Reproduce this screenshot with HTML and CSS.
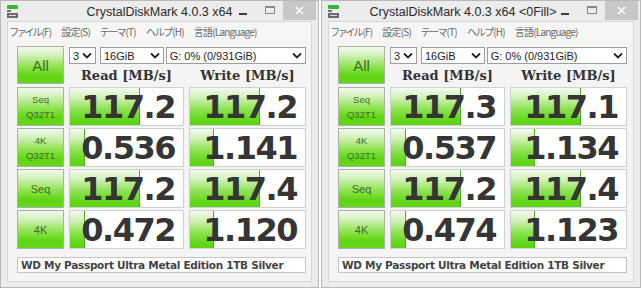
FILE: index.html
```html
<!DOCTYPE html>
<html lang="ja">
<head>
<meta charset="utf-8">
<title>CrystalDiskMark</title>
<link rel="stylesheet" href="styles.css">
</head>
<body>
<div class="desktop">
  <div class="window w1">
    <div class="titlebar">
      <svg class="app-icon" width="12" height="13" viewBox="0 0 12 13"><rect x="0" y="0" width="11" height="4" rx="1" fill="#34b834"/><rect x="0" y="5" width="4" height="2" fill="#707070"/><rect x="0" y="8" width="11" height="5" fill="#6a6a6a"/><rect x="2" y="10" width="7" height="1" fill="#dcdcdc"/></svg>
      <div class="title">CrystalDiskMark 4.0.3 x64</div>
      <div class="caption">
        <div class="cap-btn"><span class="min-glyph"></span></div>
        <div class="cap-btn"><span class="max-glyph"></span></div>
        <div class="cap-btn close"><svg width="9" height="9" viewBox="0 0 9 9"><path d="M1 1L8 8M8 1L1 8" stroke="#fff" stroke-width="1.6"/></svg></div>
      </div>
    </div>
    <div class="client">
      <div class="menubar"><span>ファイル(F)</span><span>設定(S)</span><span>テーマ(T)</span><span>ヘルプ(H)</span><span>言語(Language)</span></div>
      <div class="panel">
        <div class="btn all">All</div>
        <div class="controls">
          <div class="selects">
            <div class="select s-count"><span>3</span><svg class="chev" width="10" height="7" viewBox="0 0 10 7"><path d="M1 1.5L5 5.5L9 1.5" fill="none" stroke="#222" stroke-width="1.8"/></svg></div>
            <div class="select s-size"><span>16GiB</span><svg class="chev" width="10" height="7" viewBox="0 0 10 7"><path d="M1 1.5L5 5.5L9 1.5" fill="none" stroke="#222" stroke-width="1.8"/></svg></div>
            <div class="select s-drive"><span>G: 0% (0/931GiB)</span><svg class="chev" width="10" height="7" viewBox="0 0 10 7"><path d="M1 1.5L5 5.5L9 1.5" fill="none" stroke="#222" stroke-width="1.8"/></svg></div>
          </div>
          <div class="heads"><div>Read [MB/s]</div><div>Write [MB/s]</div></div>
        </div>

        <div class="btn label two"><span>Seq</span><span>Q32T1</span></div>
        <div class="cell"><div class="bar" style="width:70px"></div><span class="val">117.2</span></div>
        <div class="cell"><div class="bar" style="width:70px"></div><span class="val">117.2</span></div>

        <div class="btn label two"><span>4K</span><span>Q32T1</span></div>
        <div class="cell"><div class="bar" style="width:15px"></div><span class="val">0.536</span></div>
        <div class="cell"><div class="bar" style="width:24px"></div><span class="val">1.141</span></div>

        <div class="btn label one">Seq</div>
        <div class="cell"><div class="bar" style="width:70px"></div><span class="val">117.2</span></div>
        <div class="cell"><div class="bar" style="width:70px"></div><span class="val">117.4</span></div>

        <div class="btn label one">4K</div>
        <div class="cell"><div class="bar" style="width:15px"></div><span class="val">0.472</span></div>
        <div class="cell"><div class="bar" style="width:24px"></div><span class="val">1.120</span></div>

        <div class="comment">WD My Passport Ultra Metal Edition 1TB Silver</div>
      </div>
    </div>
  </div>

  <div class="window w2">
    <div class="titlebar">
      <svg class="app-icon" width="12" height="13" viewBox="0 0 12 13"><rect x="0" y="0" width="11" height="4" rx="1" fill="#34b834"/><rect x="0" y="5" width="4" height="2" fill="#707070"/><rect x="0" y="8" width="11" height="5" fill="#6a6a6a"/><rect x="2" y="10" width="7" height="1" fill="#dcdcdc"/></svg>
      <div class="title">CrystalDiskMark 4.0.3 x64 &lt;0Fill&gt;</div>
      <div class="caption">
        <div class="cap-btn"><span class="min-glyph"></span></div>
        <div class="cap-btn"><span class="max-glyph"></span></div>
        <div class="cap-btn close"><svg width="9" height="9" viewBox="0 0 9 9"><path d="M1 1L8 8M8 1L1 8" stroke="#fff" stroke-width="1.6"/></svg></div>
      </div>
    </div>
    <div class="client">
      <div class="menubar"><span>ファイル(F)</span><span>設定(S)</span><span>テーマ(T)</span><span>ヘルプ(H)</span><span>言語(Language)</span></div>
      <div class="panel">
        <div class="btn all">All</div>
        <div class="controls">
          <div class="selects">
            <div class="select s-count"><span>3</span><svg class="chev" width="10" height="7" viewBox="0 0 10 7"><path d="M1 1.5L5 5.5L9 1.5" fill="none" stroke="#222" stroke-width="1.8"/></svg></div>
            <div class="select s-size"><span>16GiB</span><svg class="chev" width="10" height="7" viewBox="0 0 10 7"><path d="M1 1.5L5 5.5L9 1.5" fill="none" stroke="#222" stroke-width="1.8"/></svg></div>
            <div class="select s-drive"><span>G: 0% (0/931GiB)</span><svg class="chev" width="10" height="7" viewBox="0 0 10 7"><path d="M1 1.5L5 5.5L9 1.5" fill="none" stroke="#222" stroke-width="1.8"/></svg></div>
          </div>
          <div class="heads"><div>Read [MB/s]</div><div>Write [MB/s]</div></div>
        </div>

        <div class="btn label two"><span>Seq</span><span>Q32T1</span></div>
        <div class="cell"><div class="bar" style="width:70px"></div><span class="val">117.3</span></div>
        <div class="cell"><div class="bar" style="width:70px"></div><span class="val">117.1</span></div>

        <div class="btn label two"><span>4K</span><span>Q32T1</span></div>
        <div class="cell"><div class="bar" style="width:15px"></div><span class="val">0.537</span></div>
        <div class="cell"><div class="bar" style="width:24px"></div><span class="val">1.134</span></div>

        <div class="btn label one">Seq</div>
        <div class="cell"><div class="bar" style="width:70px"></div><span class="val">117.2</span></div>
        <div class="cell"><div class="bar" style="width:70px"></div><span class="val">117.4</span></div>

        <div class="btn label one">4K</div>
        <div class="cell"><div class="bar" style="width:15px"></div><span class="val">0.474</span></div>
        <div class="cell"><div class="bar" style="width:24px"></div><span class="val">1.123</span></div>

        <div class="comment">WD My Passport Ultra Metal Edition 1TB Silver</div>
      </div>
    </div>
  </div>
</div>
</body>
</html>
```

FILE: styles.css
```css
* { box-sizing: border-box; }

html, body {
  margin: 0;
  padding: 0;
  background: #ffffff;
}

body {
  font-family: "Liberation Sans", "Noto Sans CJK JP", sans-serif;
  width: 642px;
  height: 292px;
  overflow: hidden;
}

.desktop {
  display: flex;
  gap: 2px;
  align-items: flex-start;
}

.window {
  width: 319px;
  height: 288px;
  background: #ececec;
  border: 1px solid #b9b9b9;
  display: flex;
  flex-direction: column;
}

.w2 { width: 320px; }

.titlebar {
  height: 20px;
  display: grid;
  grid-template-columns: minmax(0, 1fr) auto minmax(0, 1fr);
  align-items: start;
}

.app-icon {
  margin: 4px 0 0 6px;
  justify-self: start;
}

.title {
  font-family: "Liberation Sans", sans-serif;
  font-size: 12.5px;
  color: #2b2b2b;
  line-height: 20px;
  padding-top: 1px;
  white-space: nowrap;
}

.w2 .title {
  padding-right: 36px;
}

.caption {
  justify-self: end;
  display: flex;
  margin-right: 2px;
}

.cap-btn {
  width: 27px;
  height: 19px;
  display: flex;
  align-items: center;
  justify-content: center;
  flex: none;
}

.cap-btn.close {
  width: 33px;
  background: #c7c7c7;
}

.min-glyph {
  width: 8px;
  height: 2px;
  background: #3a3a3a;
  margin-top: 6px;
}

.max-glyph {
  width: 10px;
  height: 8px;
  border: 1px solid #8a8a8a;
  border-top-width: 2px;
  margin-top: -2px;
}

.client {
  margin: 0 6px 5px 6px;
  border: 1px solid #d6d6d6;
  background: #f4f4f4;
  flex: 1;
}

.menubar {
  height: 19px;
  background: #f6f6f6;
  display: flex;
  align-items: center;
  gap: 10px;
  padding-left: 2px;
  font-family: "Noto Sans CJK JP", sans-serif;
  font-feature-settings: "palt";
  font-size: 10px;
  letter-spacing: -0.8px;
  color: #6a6a6a;
  white-space: nowrap;
}

.panel {
  padding: 5px 0 2px 9px;
  display: grid;
  grid-template-columns: 47px 115px 117px;
  grid-template-rows: 39px repeat(4, 39px) 22px;
  column-gap: 5px;
  row-gap: 2px;
}

.btn {
  border: 1px solid #a9b3a3;
  background: linear-gradient(to bottom, #f2faec 0%, #d4f1bd 22%, #8fe34f 55%, #5fd514 80%, #63d81a 100%);
  color: #3f6e28;
  display: flex;
  flex-direction: column;
  align-items: center;
  justify-content: center;
}

.btn.all {
  height: 38px;
  font-size: 15px;
  color: #3c7020;
}

.btn.label.two {
  font-family: "Liberation Sans", sans-serif;
  font-size: 9.5px;
  line-height: 15px;
}

.btn.label.one {
  font-size: 11px;
}

.controls {
  grid-column: 2 / 4;
  display: flex;
  flex-direction: column;
}

.selects {
  display: flex;
  margin-top: 1px;
  height: 17px;
}

.select {
  height: 17px;
  background: #ffffff;
  border: 1px solid #9d9d9d;
  display: flex;
  align-items: center;
  justify-content: space-between;
  padding: 0 3px 0 3px;
  font-size: 11px;
  color: #1e1e1e;
}

.s-count { width: 27px; }
.s-size { width: 64px; margin-left: 4px; }
.s-drive { width: 141px; margin-left: 2px; }

.chev { flex: none; }

.heads {
  display: grid;
  grid-template-columns: 115px 117px;
  column-gap: 5px;
  margin-top: 3px;
  font-family: "DejaVu Serif", serif;
  font-weight: bold;
  font-size: 13px;
  color: #333333;
  text-align: center;
  line-height: 18px;
}

.cell {
  position: relative;
  background: #ffffff;
  border: 1px solid #cfcfcf;
  display: flex;
  align-items: center;
  justify-content: flex-end;
  padding-right: 7px;
  overflow: hidden;
}

.bar {
  position: absolute;
  left: 0;
  top: 0;
  bottom: 0;
  background: linear-gradient(to bottom, #f3fbee 0%, #d3f2bb 25%, #92e359 55%, #64d81b 85%, #5cd413 100%);
  box-shadow: inset -1px 0 0 #56a82c;
}

.val {
  position: relative;
  font-family: "DejaVu Sans", sans-serif;
  font-weight: bold;
  font-size: 32px;
  color: #353535;
  letter-spacing: -1.5px;
  margin-right: 1px;
}

.comment {
  grid-column: 1 / 4;
  margin-top: 6px;
  background: #ffffff;
  border: 1px solid #c6c6c6;
  display: flex;
  align-items: center;
  padding-left: 3px;
  font-family: "DejaVu Sans", sans-serif;
  font-weight: bold;
  font-size: 10.5px;
  letter-spacing: -0.3px;
  color: #444444;
  white-space: nowrap;
}
```
